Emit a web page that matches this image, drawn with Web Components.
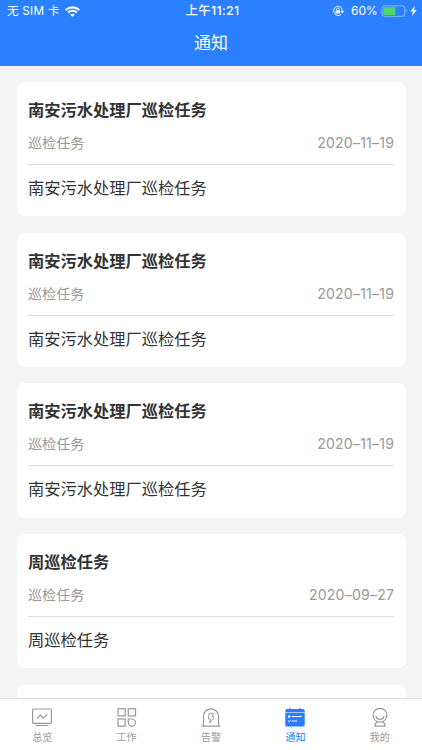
<!DOCTYPE html>
<html lang="zh-CN">
<head>
<meta charset="UTF-8">
<meta name="viewport" content="width=device-width, initial-scale=1">
<title>通知</title>
<style>
  html, body {
    margin: 0;
    height: 100%;
    overflow: hidden;
  }
  body {
    font-family: Inter, "Noto Sans CJK SC", sans-serif;
    background: #f4f4f4;
  }
</style>
</head>
<body>
<notice-app></notice-app>

<script>
class StatusBar extends HTMLElement {
  constructor() {
    super();
    this.attachShadow({ mode: 'open' });
  }

  connectedCallback() {
    this.shadowRoot.innerHTML = `
      <style>
        :host {
          display: grid;
          grid-template-columns: 1fr auto 1fr;
          align-items: center;
          height: 22px;
          padding: 0 5px 0 7px;
          color: #fff;
          font-size: 12px;
          line-height: 22px;
        }
        .side { display: flex; align-items: center; }
        .carrier { font-size: 11.7px; letter-spacing: 0.2px; white-space: pre; }
        .time { padding-left: 1px; font-weight: 500; font-size: 12.3px; letter-spacing: 0.4px; }
        .right { justify-content: flex-end; }
        svg { display: block; flex: none; }
        .wifi { margin-left: 5.5px; }
        .percent { margin: 0 3px 0 7px; font-size: 12.1px; letter-spacing: -0.2px; }
        .bolt { margin-left: 2.5px; }
      </style>
      <div class="side">
        <span class="carrier">无 SIM 卡</span>
        <svg class="wifi" width="15" height="11" viewBox="0 0 15 11" fill="none" stroke="#fff" stroke-width="2.1">
          <path d="M.8 4.1C4.5.4 10.5.4 14.2 4.1M3.2 6.6C5.6 4.2 9.4 4.2 11.8 6.6"/>
          <path d="M5.2 8.6C6.5 7.4 8.5 7.4 9.8 8.6L7.5 10.9Z" fill="#fff" stroke="none"/>
        </svg>
      </div>
      <span class="time">上午11:21</span>
      <div class="side right">
        <svg width="12" height="12" viewBox="0 0 12 12" fill="none" stroke="#fff">
          <path d="M9.3 2.7A4.5 4.5 0 1 0 9 9.3M9.3 2.7A4.5 4.5 0 0 1 10.1 6.4" stroke-width="1"/>
          <path d="M8.3 6.1H12L10.2 8.5Z" fill="#fff" stroke="none"/>
          <rect x="3.6" y="5.3" width="4.4" height="3.2" fill="#fff" stroke="none"/>
          <path d="M4.5 5.5V4.4A1.3 1.3 0 0 1 7.1 4.4V5.5" stroke-width=".8"/>
        </svg>
        <span class="percent">60%</span>
        <svg width="27" height="12" viewBox="0 0 27 12">
          <rect x=".9" y=".9" width="23" height="10.4" rx="2.6" fill="none" stroke="#fff" stroke-opacity=".45"/>
          <rect x="2.3" y="2.3" width="12" height="7.6" rx="1" fill="#4cd964"/>
          <path d="M25.4 4.3Q26.8 6 25.4 7.8Z" fill="#fff" fill-opacity=".6"/>
        </svg>
        <svg class="bolt" width="7" height="10" viewBox="0 0 7 10">
          <path d="M4.8 0 .2 5.6H2.9L1.9 10 6.8 4.1H4Z" fill="#fff"/>
        </svg>
      </div>
    `;
  }
}

class NavHeader extends HTMLElement {
  constructor() {
    super();
    this.attachShadow({ mode: 'open' });
  }

  connectedCallback() {
    this.shadowRoot.innerHTML = `
      <style>
        :host {
          display: block;
          flex: none;
          height: 65.5px;
          background: #2a80ff;
        }
        h1 {
          margin: 0;
          height: 43px;
          line-height: 42px;
          text-align: center;
          font-size: 17px;
          font-weight: 400;
          color: #fff;
        }
      </style>
      <status-bar></status-bar>
      <h1><slot></slot></h1>
    `;
  }
}

class NoticeCard extends HTMLElement {
  constructor() {
    super();
    this.attachShadow({ mode: 'open' });
  }

  connectedCallback() {
    this.shadowRoot.innerHTML = `
      <style>
        :host {
          display: block;
          box-sizing: border-box;
          flex: none;
          height: 134.2px;
          padding: 16px 11.5px 0;
          border-radius: 8px;
          background: #fff;
          color: #333;
          font-size: 16.25px;
        }
        .title {
          height: 24px;
          line-height: 24px;
          font-weight: 700;
        }
        .meta {
          display: flex;
          justify-content: space-between;
          height: 42px;
          line-height: 42px;
          border-bottom: 1px solid #dedede;
          color: #999;
          font-size: 14.1px;
        }
        .body { line-height: 47px; }
      </style>
      <div class="title"><slot name="title"></slot></div>
      <div class="meta">
        <slot name="kind"></slot>
        <slot name="date"></slot>
      </div>
      <div class="body"><slot></slot></div>
    `;
  }
}

class TabItem extends HTMLElement {
  constructor() {
    super();
    this.attachShadow({ mode: 'open' });
  }

  connectedCallback() {
    const icons = {
      overview: `
        <rect x="1.6" y="2" width="18.8" height="14.3" rx=".8"/>
        <path d="M6 11.6 9.3 8.2 12.2 11 16.2 7.4M4.8 18.5H17.2"/>`,
      work: `
        <rect x="2" y="1.7" width="7.2" height="7.2"/>
        <rect x="12.3" y="1.7" width="7.2" height="7.2"/>
        <rect x="2" y="12" width="7.2" height="7.2"/>
        <path d="M12.3 12H15.9A3.6 3.6 0 1 1 12.3 15.6Z"/>`,
      alarm: `
        <path d="M3.5 19V9.3A7.5 7.5 0 0 1 18.5 9.3V19M1.5 19.2H20.5"/>
        <path d="M9 6.3H13.2L12.6 9.9H14L9.9 16.2 10.3 11.9H8.6Z" stroke-width=".95"/>`,
      notice: `
        <path d="M1.3 5.3V3.7Q1.3 2 3 2H19Q20.7 2 20.7 3.7V5.3Z" fill="currentColor" stroke="none"/>
        <path d="M1.3 5.7H20.7V17.9Q20.7 19.5 19.1 19.5H2.9Q1.3 19.5 1.3 17.9Z" fill="currentColor" stroke="none"/>
        <path d="M6 .9V3M16 .9V3"/>
        <path d="M7.7 9.5H17.7M4 13.7 5.1 14.7 6.8 13.2M7.7 14H13" stroke="#fff" stroke-width="1"/>
        <circle cx="5.2" cy="9.5" r="1.2" fill="#fff" stroke="none"/>`,
      mine: `
        <circle cx="11" cy="8.2" r="6.9"/>
        <path d="M6.9 9A4.2 4.2 0 0 0 15.1 9M8.3 14.6Q8.2 15.8 6.6 16.4Q5.7 16.8 6.3 17.8L5.8 19.2H16.2L15.7 17.8Q16.3 16.8 15.4 16.4Q13.8 15.8 13.7 14.6"/>`
    };
    this.shadowRoot.innerHTML = `
      <style>
        :host {
          display: flex;
          flex: 1;
          flex-direction: column;
          align-items: center;
          padding-top: 8px;
          color: #999;
          font-size: 10px;
          line-height: 15px;
        }
        :host([active]) { color: #2a7dff; }
        svg { display: block; margin-bottom: 1px; }
      </style>
      <svg width="22" height="22" viewBox="0 0 22 22" fill="none" stroke="currentColor" stroke-width="1.2">
        ${icons[this.getAttribute('icon')]}
      </svg>
      <slot></slot>
    `;
  }
}

class TabBar extends HTMLElement {
  constructor() {
    super();
    this.attachShadow({ mode: 'open' });
  }

  connectedCallback() {
    this.shadowRoot.innerHTML = `
      <style>
        :host {
          display: flex;
          flex: none;
          box-sizing: border-box;
          height: 52px;
          border-top: 1px solid #dedede;
          background: #fff;
        }
      </style>
      <slot></slot>
    `;
  }
}

class NoticeApp extends HTMLElement {
  constructor() {
    super();
    this.attachShadow({ mode: 'open' });
    this.notices = [
      { title: '南安污水处理厂巡检任务', kind: '巡检任务', date: '2020–11–19' },
      { title: '南安污水处理厂巡检任务', kind: '巡检任务', date: '2020–11–19' },
      { title: '南安污水处理厂巡检任务', kind: '巡检任务', date: '2020–11–19' },
      { title: '周巡检任务', kind: '巡检任务', date: '2020–09–27' },
      { title: '', kind: '', date: '' }
    ];
    this.tabs = [
      { icon: 'overview', label: '总览' },
      { icon: 'work', label: '工作' },
      { icon: 'alarm', label: '告警' },
      { icon: 'notice', label: '通知', active: true },
      { icon: 'mine', label: '我的' }
    ];
  }

  connectedCallback() {
    const cards = this.notices.map((n) => `
      <notice-card>
        <span slot="title">${n.title}</span>
        <span slot="kind">${n.kind}</span>
        <span slot="date" class="date">${n.date}</span>
        ${n.title}
      </notice-card>`).join('');
    const tabs = this.tabs.map((t) => `
      <tab-item icon="${t.icon}" ${t.active ? 'active' : ''}>${t.label}</tab-item>`).join('');

    this.shadowRoot.innerHTML = `
      <style>
        :host {
          display: flex;
          flex-direction: column;
          height: 100vh;
        }
        main {
          display: flex;
          flex: 1;
          flex-direction: column;
          gap: 16.5px;
          min-height: 0;
          padding: 16.5px 16.5px 0;
          overflow: hidden;
        }
        .date { letter-spacing: 0.2px; margin-right: -0.2px; }
      </style>
      <nav-header>通知</nav-header>
      <main>${cards}</main>
      <tab-bar>${tabs}</tab-bar>
    `;
  }
}

customElements.define('status-bar', StatusBar);
customElements.define('nav-header', NavHeader);
customElements.define('notice-card', NoticeCard);
customElements.define('tab-item', TabItem);
customElements.define('tab-bar', TabBar);
customElements.define('notice-app', NoticeApp);
</script>
</body>
</html>
